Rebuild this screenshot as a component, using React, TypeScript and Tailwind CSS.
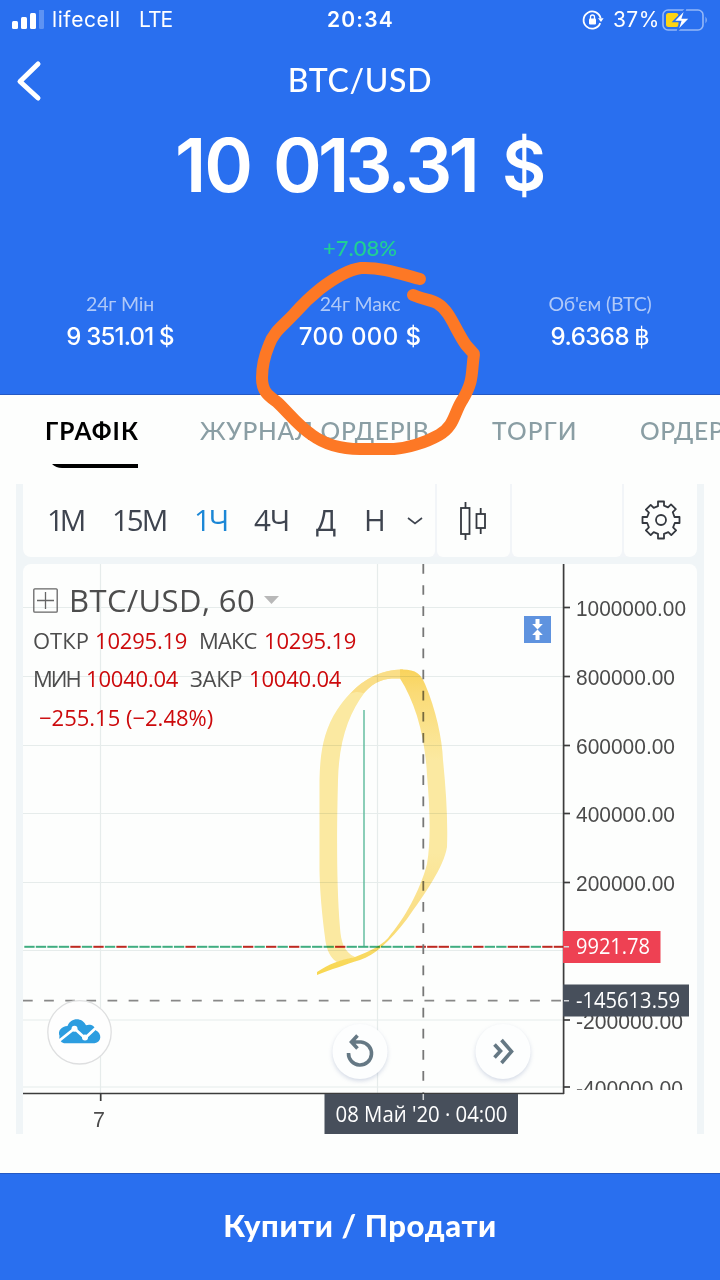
import React from 'react';
import { clsx } from 'clsx';

const stats = [
  { label: '24г Мін', value: '9 351.01 $', className: 'tracking-[-0.8px]' },
  { label: '24г Макс', value: '700 000 $', className: 'tracking-[0.4px]' },
  { label: "Об'єм (BTC)", value: '9.6368', className: 'tracking-[-0.5px]', coin: true },
];

const tabs = [
  { name: 'ГРАФІК', className: 'w-[155px] font-bold text-black tracking-[1.1px]' },
  { name: 'ЖУРНАЛ ОРДЕРІВ', className: 'w-[292px] font-medium text-[#8a9ea4] tracking-[0.7px]' },
  { name: 'ТОРГИ', className: 'w-[148px] font-medium text-[#8a9ea4] tracking-[1.1px]' },
  { name: 'ОРДЕРИ', className: 'w-[120px] font-medium text-[#8a9ea4] tracking-[0.6px]' },
];

const intervals = [
  { name: '1М', className: 'w-[65px] tracking-[-4px]' },
  { name: '15М', className: 'w-[82px] tracking-[-2px]' },
  { name: '1Ч', className: 'w-[60px] tracking-[-2px] text-[#1b87d6]' },
  { name: '4Ч', className: 'w-[62px] tracking-[-1px]' },
  { name: 'Д', className: 'w-[48px]' },
  { name: 'Н', className: 'w-[43px]' },
];

const gridLines = [
  { y: 607.5, label: '1000000.00', width: 109 },
  { y: 676.5, label: '800000.00', width: 98 },
  { y: 745.5, label: '600000.00', width: 98 },
  { y: 813.5, label: '400000.00', width: 98 },
  { y: 882.5, label: '200000.00', width: 98 },
  { y: 1020, label: '-200000.00', width: 106 },
  { y: 1087, label: '-400000.00', width: 106 },
];

const candles = Array.from({ length: 47 }, (_, i) => i);
const redCandles = [4, 6, 8, 14, 19, 21, 23, 27, 34, 35, 36, 39, 42, 43, 45, 46];

const StatusBar = () => (
  <div className="flex h-10 items-center pr-[10px] pl-3 font-['Inter'] text-[21px]">
    <svg width="34" height="20" viewBox="0 0 34 20" fill="#fff">
      <rect x="0" y="11" width="6" height="8" rx="1.5" />
      <rect x="9" y="7" width="6" height="12" rx="1.5" />
      <rect x="18" y="3" width="6" height="16" rx="1.5" />
      <rect x="27" y="-1" width="5" height="20" rx="1.5" opacity="0.25" />
    </svg>
    <span className="ml-[6px] w-[87px] tracking-[0.6px]">lifecell</span>
    <span className="w-[188px] tracking-[-0.9px]">LTE</span>
    <span className="w-[255px] font-semibold tracking-[1.2px]">20:34</span>
    <svg width="22" height="22" viewBox="0 0 22 22" fill="none" stroke="#fff" strokeWidth="1.8">
      <path d="M18.2 14.2a8.6 8.6 0 1 1 .4-5" />
      <path d="M16 9.3h5.6L19 13z" fill="#fff" stroke="none" />
      <rect x="7" y="9.5" width="7" height="6" rx="1" fill="#fff" stroke="none" />
      <path d="M8.5 10V8a2 2 0 0 1 4 0v2" strokeWidth="1.3" />
    </svg>
    <span className="ml-[9px] w-[49px] tracking-[0.4px]">37%</span>
    <svg width="47" height="24" viewBox="0 0 47 24" className="shrink-0">
      <rect x="1" y="2" width="40" height="20" rx="5" fill="none" stroke="#fff" strokeOpacity="0.5" strokeWidth="1.6" />
      <path d="M43.5 8.5q2.6 3.5 0 7z" fill="#fff" opacity="0.5" />
      <rect x="4" y="5" width="12.5" height="14" rx="2.5" fill="#fdd412" />
      <path d="M23.5 1L11.5 13.5h7L15.5 23 28 10h-7.5z" fill="#fff" stroke="#296fef" strokeWidth="1.6" />
    </svg>
  </div>
);

const Header = () => (
  <header className="h-[395px] border-b border-[#2459c4] bg-[#296fef] text-white">
    <StatusBar />
    <div className="grid h-[82px] grid-cols-3 items-center">
      <svg className="ml-4" width="27" height="42" viewBox="0 0 27 42" fill="none" stroke="#fff" strokeWidth="5" strokeLinecap="round" strokeLinejoin="round">
        <path d="M22 4L4 21.5 22 38" />
      </svg>
      <h1 className="pb-[2px] text-center text-[32px] font-medium tracking-[0.7px]">BTC/USD</h1>
    </div>
    <div className="flex h-[86px] items-center justify-center font-['Inter'] text-[74px] font-semibold">
      <span className="w-[98px] tracking-[-2px]">10</span>
      <span className="w-[229px] tracking-[-3.8px]">013.31</span>
      <span className="w-[43px] text-[68px]">$</span>
    </div>
    <div className="flex h-20 items-center justify-center pb-px text-[22px] font-medium text-[#20cf94]">+7.08%</div>
    <div className="grid grid-cols-3 text-center">
      {stats.map((stat) => (
        <div key={stat.label}>
          <div className="h-8 text-[19.5px] leading-8 tracking-[-0.2px] text-[#b0c9f8]">{stat.label}</div>
          <div className={clsx("flex h-8 items-center justify-center pt-px font-['Inter'] text-[24px] font-medium", stat.className)}>
            {stat.value}
            {stat.coin && <span className="ml-[5px] font-['DejaVu_Sans'] text-[25px]">฿</span>}
          </div>
        </div>
      ))}
    </div>
  </header>
);

const Tabs = () => (
  <nav className="h-[89px] overflow-hidden pl-[45px]">
    <div className="flex h-[69px] items-center text-[24.5px] whitespace-nowrap">
      {tabs.map((tab) => (
        <span key={tab.name} className={clsx('shrink-0 pt-[3px]', tab.className)}>{tab.name}</span>
      ))}
    </div>
    <svg className="ml-[7px] block" width="86" height="4" viewBox="0 0 86 4"><path d="M0 0h86v4H10Q4 4 0 0z" /></svg>
  </nav>
);

const Toolbar = () => (
  <div className="flex h-[73px] gap-[2px] overflow-hidden rounded-b-lg bg-[#f2f5f8] text-[#3e444f]">
    <div className="flex w-[412px] items-center rounded-br-md bg-[#fdfefd] pl-[24px] font-['Open_Sans'] text-[29.5px] font-medium">
      {intervals.map((item) => (
        <span key={item.name} className={clsx('shrink-0', item.className)}>{item.name}</span>
      ))}
      <svg width="16" height="8" viewBox="0 0 16 8" className="shrink-0" fill="none" stroke="currentColor" strokeWidth="1.6">
        <path d="M1 1l7 5.5L15 1" />
      </svg>
    </div>
    <div className="flex w-[73px] items-center rounded-b-md bg-[#fdfefd] pl-[23px]">
      <svg width="27" height="40" viewBox="0 0 27 40" fill="none" stroke="#34383f" strokeWidth="1.8">
        <path d="M5.5 1v6m0 26v6M20.7 7v6m0 14v6" />
        <rect x="1" y="7" width="8.5" height="26" />
        <rect x="16.5" y="13" width="8.5" height="14" />
      </svg>
    </div>
    <div className="w-[110px] rounded-b-md bg-[#fdfefd]" />
    <div className="flex flex-1 items-center justify-center rounded-b-md bg-[#fdfefd] pb-px">
      <svg width="40" height="40" viewBox="-20 -20 40 40" fill="none" stroke="#34383f" strokeWidth="1.8" strokeLinejoin="round">
        <circle r="5" />
        <path d="M-3-18.5h6v4.2l4 1.7 3-3 4.8 4.8-3 3 1.7 4.8H18.500v6h-4.700l-1.700 4.300 3 3-4.800 4.800-3-3-4.300 1.700V18.500h-6v-4.700l-4.300-1.700-3 3-4.800-4.800 3-3-1.700-4.300H-18.500v-6h4.700l1.700-4.300-3-3 4.800-4.800 3 3 4.300-1.700z" />
      </svg>
    </div>
  </div>
);

const Legend = () => (
  <div className="absolute top-[14px] left-[10px] font-['Open_Sans'] whitespace-nowrap text-[#4d4d4d]">
    <div className="flex h-[44px] items-center">
      <svg width="25" height="25" viewBox="0 0 25 25" fill="none" stroke="#666" strokeWidth="1.3">
        <rect x="0.8" y="0.8" width="23.4" height="23.4" rx="1" />
        <path d="M12.5 4v17M4 12.5h17" />
      </svg>
      <span className="ml-[11px] w-[195px] text-[31px] tracking-[0.4px]">BTC/USD, 60</span>
      <svg width="15" height="8" viewBox="0 0 15 8" fill="#b8b8b8"><path d="M0 0h15L7.5 8z" /></svg>
    </div>
    <div className="flex h-[36px] items-center text-[22px] font-medium">
      <span className="w-[62px] font-normal">ОТКР</span>
      <span className="w-[104px] tracking-[-0.2px] text-[#cc0a0c]">10295.19</span>
      <span className="w-[65px] font-normal tracking-[-0.9px]">МАКС</span>
      <span className="tracking-[-0.2px] text-[#cc0a0c]">10295.19</span>
    </div>
    <div className="flex h-[40px] items-center text-[22px] font-medium">
      <span className="w-[53px] font-normal tracking-[-2px]">МИН</span>
      <span className="w-[104px] tracking-[-0.2px] text-[#cc0a0c]">10040.04</span>
      <span className="w-[59px] font-normal tracking-[-0.3px]">ЗАКР</span>
      <span className="tracking-[-0.2px] text-[#cc0a0c]">10040.04</span>
    </div>
    <div className="flex h-[38px] items-center pl-[6px] text-[22px] font-medium text-[#cc0a0c]">−255.15 (−2.48%)</div>
  </div>
);

const Chart = () => (
  <div className="relative mt-[7px] h-[570px] rounded-t-lg bg-[#fdfefd]">
    <svg className="block" width="674" height="570" viewBox="23 564 674 570">
      <g stroke="#e6eceb" strokeWidth="1.2">
        <path d="M100.5 564v529M377.5 564v529M23 950.5h540" />
        {gridLines.map((line) => <path key={line.y} d={`M23 ${line.y}h540`} />)}
      </g>
      <path d="M364 710v237" stroke="#65bea0" strokeWidth="1.5" />
      {candles.map((i) => (
        <rect key={i} x={24.3 + i * 11.51} y="945.8" width="10.3" height="2" fill={redCandles.includes(i) ? '#bd2920' : '#40ad80'} />
      ))}
      <path d="M423.3 564v529" stroke="#777" strokeWidth="1.8" strokeDasharray="9.7 11.43" />
      <path d="M23 1000.7h540" stroke="#888" strokeWidth="1.8" strokeDasharray="9.7 11.43" />
      <path d="M563.6 564v530M23 1093.5h541" stroke="#3c3c3c" strokeWidth="1.7" />
      <path d="M100.7 1094v7" stroke="#3c3c3c" strokeWidth="1.7" />
      <clipPath id="axis"><rect x="560" y="564" width="137" height="526" /></clipPath>
      <g clipPath="url(#axis)" fontFamily="Liberation Sans, sans-serif" fontSize="21.5" fill="#4b4b4b">
        {gridLines.map((line) => (
          <g key={line.label}>
            <path d={`M563 ${line.y}h7`} stroke="#3c3c3c" strokeWidth="1.7" />
            <text x="576" y={line.y + 8.5} textLength={line.width + 1} lengthAdjust="spacingAndGlyphs">{line.label}</text>
          </g>
        ))}
      </g>
      <text x="93" y="1127" fontFamily="Liberation Sans, sans-serif" fontSize="21.5" fill="#4b4b4b">7</text>
      <g fontFamily="Open Sans, sans-serif" fontSize="21" fontWeight="500" fill="#fff">
        <rect x="563" y="931" width="97.5" height="32" fill="#ee4153" />
        <rect x="563" y="984.5" width="126" height="32" fill="#474f5b" />
        <rect x="324.5" y="1094" width="193.5" height="40" fill="#474f5b" />
        <path d="M564 946.7h5M564 1000.7h5M423.3 1094v6" stroke="#d4d6d9" strokeWidth="1.5" />
        <text x="576" y="954" textLength="74" lengthAdjust="spacingAndGlyphs">9921.78</text>
        <text x="576" y="1007.5" textLength="104" lengthAdjust="spacingAndGlyphs">-145613.59</text>
        <text x="335.5" y="1121.5" textLength="172" lengthAdjust="spacingAndGlyphs">08 Май '20 · 04:00</text>
      </g>
      <rect x="524" y="616" width="27" height="27" fill="#5f93df" />
      <path d="M535.5 619h4v5h3.3l-5.3 5.4-5.3-5.4h3.3zM535.5 640h4v-5h3.3l-5.3-5.4-5.3 5.4h3.3z" fill="#fff" />
      <circle cx="79.5" cy="1032.3" r="31.7" fill="#fefefe" stroke="#dedfe0" strokeWidth="1.3" />
      <path d="M64 1043.3a6 6 0 0 1-4.5-7.5c-2-5 2-9.5 8-9.8 3-9 15-9 18.5-.8 4-1.5 9 0 10 5.3 6 3 6 11.5-1.5 12.8z" fill="#2c9de0" />
      <path d="M59.5 1040.5L74.5 1028.5l10.5 9.5L98 1026" fill="none" stroke="#fff" strokeWidth="2.8" />
      <circle cx="74.5" cy="1028.7" r="3" fill="#fff" />
      <circle cx="85" cy="1037.5" r="3" fill="#fff" />
      <g style={{ filter: 'drop-shadow(0 2px 2px rgba(70,90,150,.22))' }} fill="#fdfefe">
        <circle cx="360" cy="1051.5" r="27.5" />
        <circle cx="503" cy="1051.5" r="27.5" />
      </g>
      <g fill="none" stroke="#657884" strokeWidth="3.6">
        <path d="M357.5 1035.5l-6 6.5 6 6.5M352 1042h9a11.5 11.5 0 1 1-12.5 11" />
        <path d="M494.5 1044.5l6 6.5-6 6.5M501.5 1040l10 11.5-10 11.5" />
      </g>
      {/* highlighter loop around the spike */}
      <linearGradient id="marker" gradientUnits="userSpaceOnUse" x1="0" y1="669" x2="0" y2="975">
        <stop offset="0" stopColor="#fbd45c" />
        <stop offset="0.08" stopColor="#fcdc78" />
        <stop offset="0.3" stopColor="#fdeaa2" />
        <stop offset="0.6" stopColor="#fdeaa2" />
        <stop offset="0.8" stopColor="#fce088" />
        <stop offset="1" stopColor="#fad850" />
      </linearGradient>
      <g className="mix-blend-multiply">
        <path d="M403 669.5C375 669 353 686 337 710C324 730 320 752 319.5 780V870C320 900 324 930 326 944C328 954 333 960 337 962L355 957C344 952 341 942 340 928C336 880 337 820 338 780C339 740 349 713 365 692C376 679 388 678 400 678.5Z" fill="#fdeaa2" />
        <path d="M403 669.5C384 669 364 678 350 694C358 690 361 693 364 693C376 679 388 678 400 678.5Z" fill="#fcdf88" />
        <path d="M400 669.5C416 669 421 674 425 684C436 710 442 738 443 760C446 790 448 820 447 847C444 867 424 895 407 919C389 942 375 955 360 960C347 964 330 970 317 975V972C329 964 339 960 355 957C370 951 384 945 391 934C408 914 422 884 427 864C431 840 430 810 427 775C425 735 415 702 400 678.5Z" fill="url(#marker)" />
      </g>
    </svg>
    <Legend />
  </div>
);

const App = () => {
  return (
    <div className="relative h-[1280px] w-[720px] overflow-hidden bg-[#fdfefd] font-['Lato',sans-serif]">
      <Header />
      <Tabs />
      <main className="mx-4 h-[650px] bg-[#f0f5f7] px-[7px]">
        <Toolbar />
        <Chart />
      </main>
      <button className="mt-[39px] flex h-[107px] w-full items-center justify-center border-t border-[#2459c4] bg-[#296fef] pb-[3px] text-[31px] font-black tracking-[0.6px] text-white">
        Купити / Продати
      </button>
      {/* freehand marker around the 24h maximum */}
      <svg className="pointer-events-none absolute top-0 left-0" width="720" height="480" viewBox="0 0 720 480" fill="none" stroke="#fd7825" strokeWidth="12" strokeLinecap="round" strokeLinejoin="round">
        <path d="M420 279C398 273 380 267 361 268C347 270 333 279 320 289C310 297 301 306 294 314C283 326 274 331 269 345C264 357 262 365 262 378C262 392 269 396 277 402C288 412 297 425 312 435C327 446 344 449 360 449H394C407 448 425 443 439 435C455 426 454 412 463 399C474 380 471 374 474 354L466 345C459 335 454 323 448 314C437 298 429 302 413 295" />
      </svg>
    </div>
  );
};

export default App;
